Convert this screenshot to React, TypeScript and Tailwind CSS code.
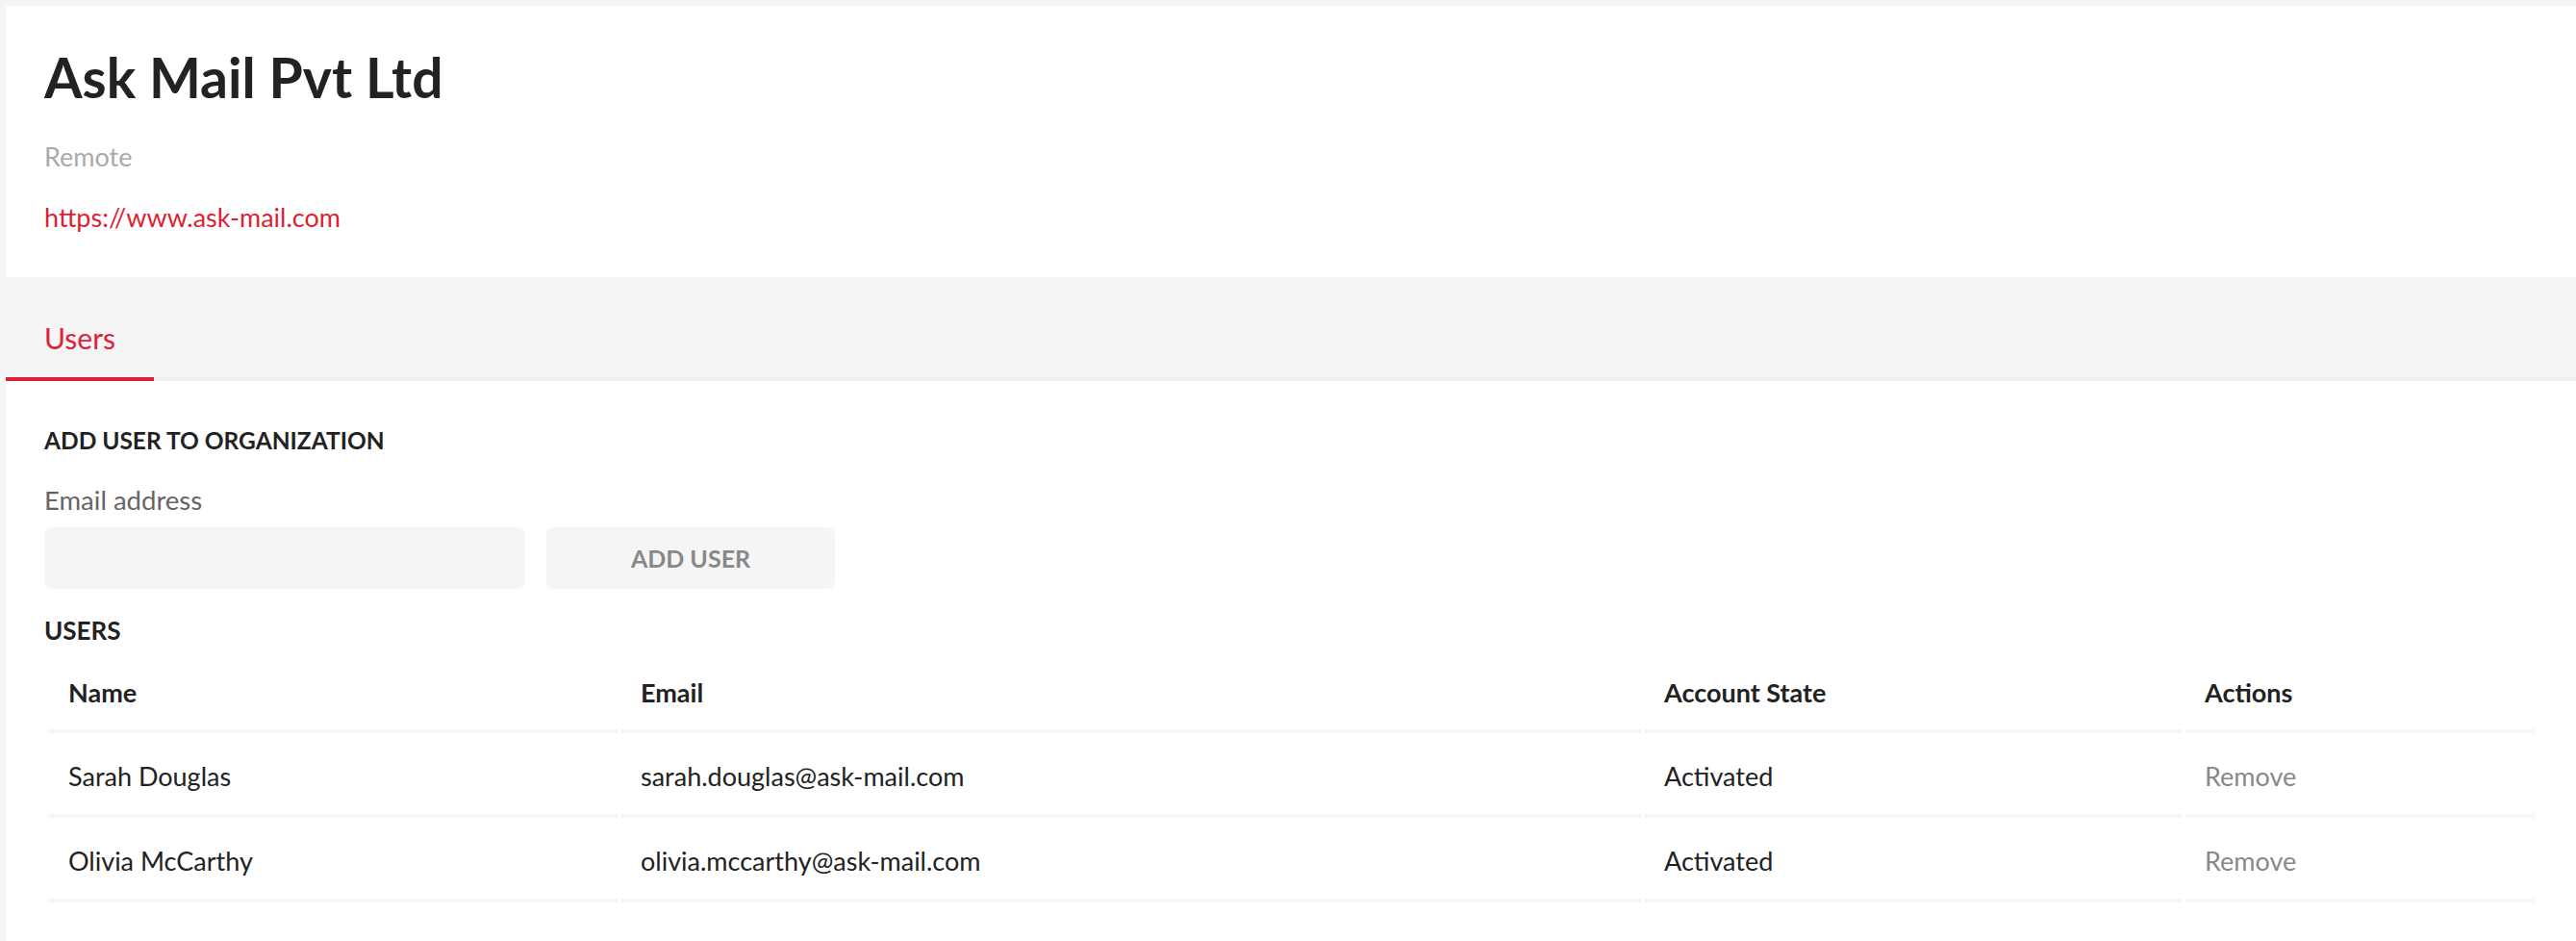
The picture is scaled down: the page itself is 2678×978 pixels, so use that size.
import React from "react";

const users = [
  { name: "Sarah Douglas", email: "sarah.douglas@ask-mail.com", state: "Activated" },
  { name: "Olivia McCarthy", email: "olivia.mccarthy@ask-mail.com", state: "Activated" },
];

export default function App() {
  return (
    <div
      className="min-h-screen bg-[#f5f5f5] pt-[6px] pl-[6px] text-[#222222]"
      style={{ fontFamily: "Lato, 'Liberation Sans', sans-serif" }}
    >
      {/* Header card */}
      <div className="h-[282px] bg-white pl-[40px] pt-[34px]">
        <h1 className="h-[80px] text-[57px] font-bold leading-[80px] text-[#222222]">Ask Mail Pvt Ltd</h1>
        <div className="mt-[22px] h-[41px] text-[27px] leading-[41px] text-[#aaaaaa]">Remote</div>
        <a className="mt-[23px] block h-[40px] text-[27px] leading-[40px] text-[#dc1f35]">https://www.ask-mail.com</a>
      </div>

      {/* Tabs */}
      <div className="flex h-[108px] border-b-4 border-[#eeeeee] bg-[#f5f5f5]">
        <div className="-mb-[4px] w-[154px] border-b-4 border-[#dc2238] pt-[43px] text-center">
          <span className="block h-[40px] text-[30px] leading-[40px] text-[#dc2238]">Users</span>
        </div>
      </div>

      {/* Content */}
      <div className="bg-white px-[40px] pt-[41px] pb-[40px]">
        <div className="h-[41px] text-[24.5px] font-bold leading-[41px] text-[#222222]">ADD USER TO ORGANIZATION</div>
        <div className="mt-[22px] h-[40px] text-[27.5px] leading-[40px] text-[#666666]">Email address</div>
        <div className="mt-[8px] flex gap-[22px]">
          <input className="h-[64px] w-[500px] rounded-[8px] bg-[#f5f5f5] px-4 text-[27px] outline-none" />
          <button className="h-[64px] w-[300px] rounded-[8px] bg-[#f5f5f5] pt-[2px] text-[25px] font-bold text-[#888888]">
            ADD USER
          </button>
        </div>
        <div className="mt-[23px] h-[41px] text-[26px] font-bold leading-[41px] text-[#222222]">USERS</div>
        <table className="-mt-[1px] w-full table-fixed border-separate border-spacing-x-[4px] border-spacing-y-0 text-left text-[27px]">
          <thead>
            <tr>
              <th className="w-[592px] border-b-4 border-[#f5f5f5] pl-[21px] pt-[25px] pb-[18px] font-bold leading-[40px]">Name</th>
              <th className="w-[1060px] border-b-4 border-[#f5f5f5] pl-[20px] pt-[25px] pb-[18px] font-bold leading-[40px]">Email</th>
              <th className="w-[558px] border-b-4 border-[#f5f5f5] pl-[20px] pt-[25px] pb-[18px] font-bold leading-[40px]">Account State</th>
              <th className="border-b-4 border-[#f5f5f5] pl-[20px] pt-[25px] pb-[18px] font-bold leading-[40px]">Actions</th>
            </tr>
          </thead>
          <tbody>
            {users.map((u) => (
              <tr key={u.email}>
                <td className="border-b-4 border-[#f5f5f5] pl-[21px] pt-[25px] pb-[19px] leading-[40px]">{u.name}</td>
                <td className="border-b-4 border-[#f5f5f5] pl-[20px] pt-[25px] pb-[19px] leading-[40px]">{u.email}</td>
                <td className="border-b-4 border-[#f5f5f5] pl-[20px] pt-[25px] pb-[19px] leading-[40px]">{u.state}</td>
                <td className="border-b-4 border-[#f5f5f5] pl-[20px] pt-[25px] pb-[19px] leading-[40px] text-[#888888]">Remove</td>
              </tr>
            ))}
          </tbody>
        </table>
      </div>
    </div>
  );
}
